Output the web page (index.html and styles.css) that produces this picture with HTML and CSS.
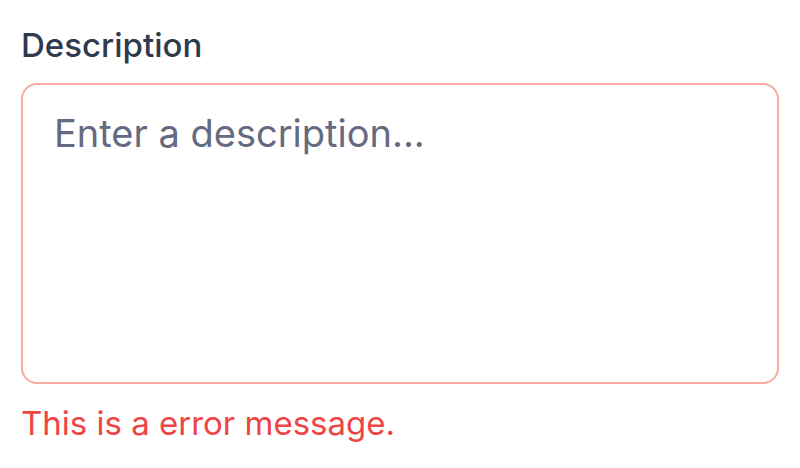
FILE: index.html
```html
<!DOCTYPE html>
<html lang="en">
<head>
<meta charset="utf-8">
<link rel="stylesheet" href="styles.css">
</head>
<body>
<div class="field">
  <label class="label" for="desc">Description</label>
  <textarea id="desc" class="input" placeholder="Enter a description..."></textarea>
  <p class="error">This is a error message.</p>
</div>
</body>
</html>
```
FILE: styles.css
```css
html, body {
  margin: 0;
  padding: 0;
  background: #ffffff;
  font-family: "Inter", "Liberation Sans", sans-serif;
}
.field {
  display: flex;
  flex-direction: column;
  padding: 21px 21px 0 21px;
}
.label {
  font-size: 33px;
  line-height: 48px;
  font-weight: 500;
  color: #2f3a4f;
  margin-bottom: 14px;
}
.input {
  box-sizing: border-box;
  width: 100%;
  height: 301px;
  margin: 0;
  border: 2px solid #f9a8a4;
  border-radius: 16px;
  padding: 20px 31px;
  font-family: "Inter", "Liberation Sans", sans-serif;
  font-size: 38px;
  line-height: 57px;
  color: #1e293b;
  resize: none;
  outline: none;
  background: #fff;
}
.input::placeholder {
  color: #646a80;
  opacity: 1;
}
.error {
  margin: 15px 0 0 0;
  font-size: 33px;
  line-height: 48px;
  color: #ef4444;
}
```
